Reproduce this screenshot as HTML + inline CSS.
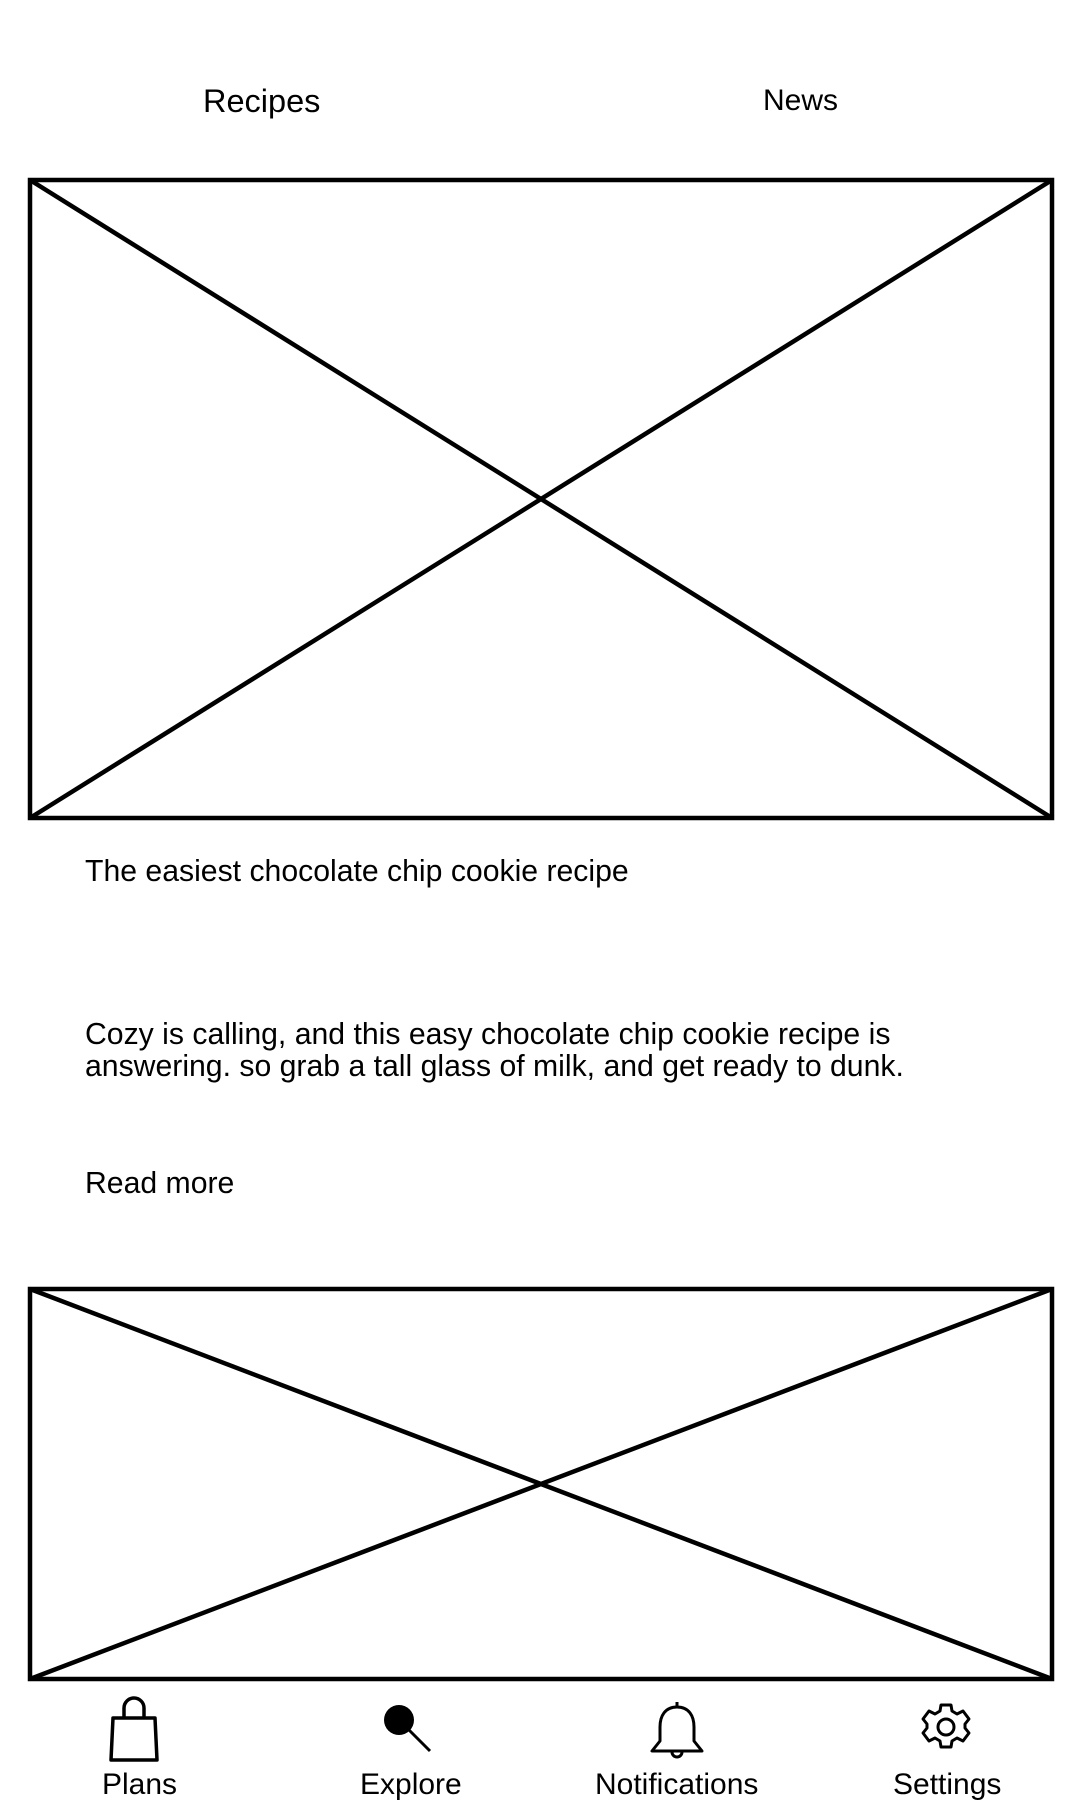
<!DOCTYPE html>
<html><head><meta charset="utf-8"><style>
body{margin:0;width:1080px;height:1800px;background:#fff;position:relative;overflow:hidden;font-family:"Liberation Sans",sans-serif;color:#000}
.t{position:absolute;white-space:nowrap;line-height:1}
svg{position:absolute;left:0;top:0}
</style></head><body>
<div class="t" style="left:203px;top:85px;font-size:32.5px">Recipes</div>
<div class="t" style="left:763px;top:86px;font-size:30px">News</div>
<svg width="1080" height="1800" fill="none" stroke="#000" stroke-width="4.5">
<rect x="30" y="180" width="1022" height="638"/>
<line x1="30" y1="180" x2="1052" y2="818"/><line x1="1052" y1="180" x2="30" y2="818"/>
<rect x="30" y="1289" width="1022" height="390"/>
<line x1="30" y1="1289" x2="1052" y2="1679"/><line x1="1052" y1="1289" x2="30" y2="1679"/>
<path d="M113 1718 h42 l2 42 h-46 z" stroke-width="3.5" stroke-linejoin="round"/>
<path d="M124 1718 v-10 a10 10 0 0 1 20 0 v10" stroke-width="3.5"/>
<circle cx="399" cy="1720" r="15" fill="#000" stroke="none"/>
<path d="M402 1723 l28 28" stroke-width="3"/>
<path d="M677 1707 c-12 0 -17 9 -17 20 v14 l-8 10 h50 l-8 -10 v-14 c0 -11 -5 -20 -17 -20z" stroke-width="3" stroke-linejoin="round"/>
<path d="M677 1702 v5" stroke-width="3"/><path d="M672 1752 a5 5 0 0 0 10 0" stroke-width="3"/>
<circle cx="946" cy="1727" r="8" stroke-width="3"/>
<path d="M941 1705 h10 l1 6 l5 3 l6 -3 l6 8 l-4 5 v4 l4 5 l-6 8 l-6 -3 l-5 3 l-1 6 h-10 l-1 -6 l-5 -3 l-6 3 l-6 -8 l4 -5 v-4 l-4 -5 l6 -8 l6 3 l5 -3z" stroke-width="3" stroke-linejoin="round"/>
</svg>
<div class="t" style="left:85px;top:857px;font-size:30.2px">The easiest chocolate chip cookie recipe</div>
<div class="t" style="left:85px;top:1019px;font-size:30.2px;line-height:32px">Cozy is calling, and this easy chocolate chip cookie recipe is<br>answering. so grab a tall glass of milk, and get ready to dunk.</div>
<div class="t" style="left:85px;top:1169px;font-size:30.2px">Read more</div>
<div class="t" style="left:102px;top:1770px;font-size:30px">Plans</div>
<div class="t" style="left:360px;top:1770px;font-size:30px">Explore</div>
<div class="t" style="left:595px;top:1770px;font-size:30px">Notifications</div>
<div class="t" style="left:893px;top:1770px;font-size:30px">Settings</div>
</body></html>
